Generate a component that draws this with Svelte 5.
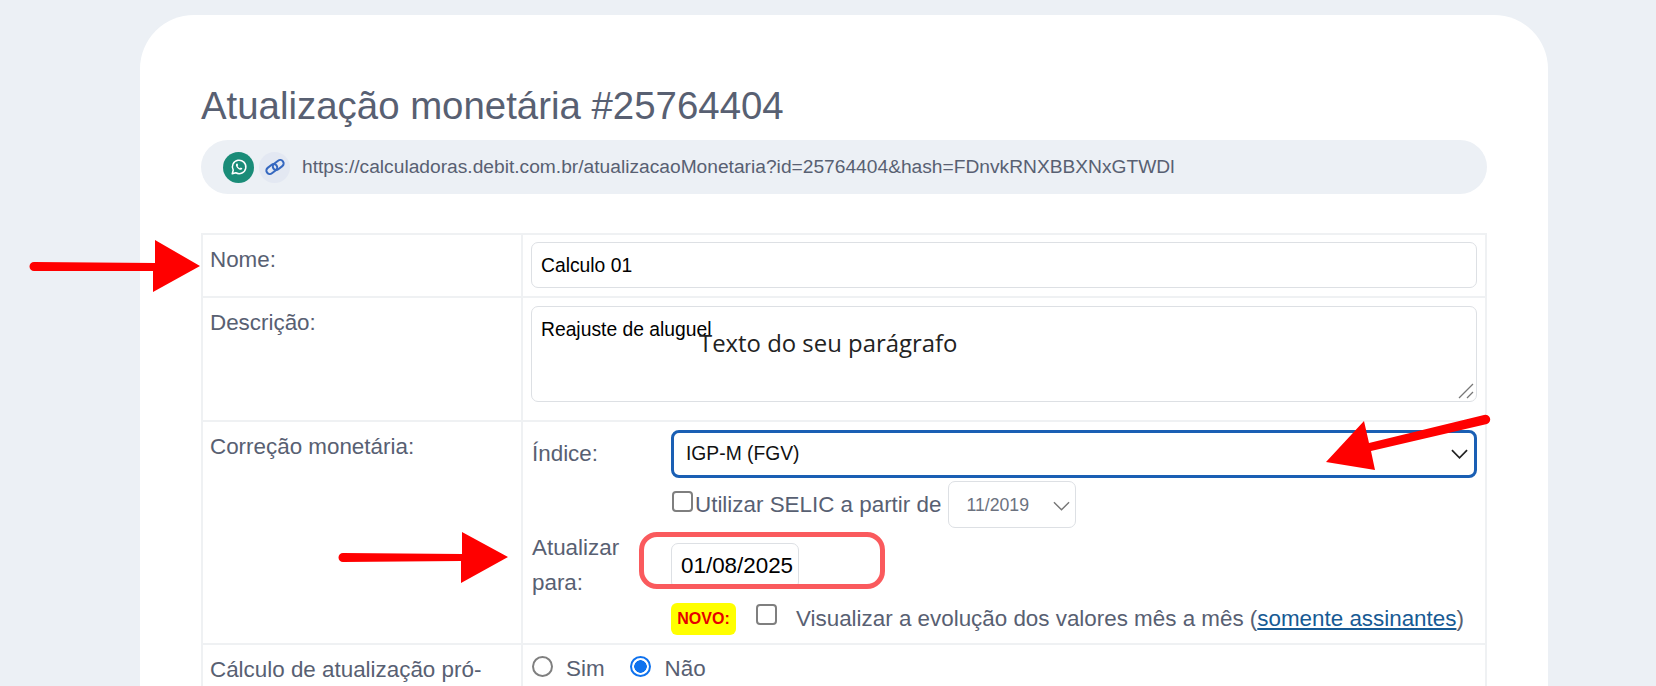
<script lang="ts">
  const shareUrl = 'https://calculadoras.debit.com.br/atualizacaoMonetaria?id=25764404&hash=FDnvkRNXBBXNxGTWDl';
</script>

<div class="page">
  <main class="card">
    <h1>Atualização monetária #25764404</h1>

    <div class="share">
      <span class="icon-btn whats">
        <svg viewBox="0 0 24 24" width="18" height="18" fill="none" stroke="#fff" stroke-width="2">
          <path d="M3 21l1.300-4.700a9 9 0 1 1 3.400 3.400z" stroke-linejoin="round" />
          <path d="M8.600 7.600c-.9.9-.9 2.400 0 4 1.100 2 2.600 3.300 4.600 4 1.400.4 2.500.1 3-.9.2-.4.2-.8.1-1l-2-1-.9 1c-1.500-.5-2.700-1.700-3.300-3.200l.8-.9-.8-2.100c-.5-.2-1-.2-1.500.1z" fill="#fff" stroke="none" />
        </svg>
      </span>
      <span class="icon-btn chain">
        <svg viewBox="0 0 24 24" width="22" height="22" fill="none" stroke="#3568c0" stroke-width="2.200">
          <rect x="2" y="10.500" width="13" height="7.500" rx="3.750" transform="rotate(-38 8.500 14.250)" />
          <rect x="9" y="6" width="13" height="7.500" rx="3.750" transform="rotate(-38 15.500 9.750)" />
        </svg>
      </span>
      <span class="url">{shareUrl}</span>
    </div>

    <table>
      <tbody>
        <tr>
          <td class="label-cell">Nome:</td>
          <td><input class="field" type="text" value="Calculo 01" /></td>
        </tr>
        <tr>
          <td class="label-cell">Descrição:</td>
          <td>
            <div class="area-wrap">
              <textarea class="field area">Reajuste de aluguel</textarea>
              <svg class="grip" viewBox="0 0 16 16" width="16" height="16" stroke="#777" stroke-width="1.300">
                <path d="M1 15L15 1M9 15l6-6" />
              </svg>
            </div>
          </td>
        </tr>
        <tr>
          <td class="label-cell">Correção monetária:</td>
          <td>
            <div class="correction">
              <span class="index-label">Índice:</span>
              <div class="select focus">
                IGP-M (FGV)
                <svg viewBox="0 0 18 10" width="17" height="10" fill="none" stroke="#222" stroke-width="1.800"><path d="M1 1l8 8 8-8" /></svg>
              </div>

              <div class="selic">
                <span class="check raised"></span>
                <span class="selic-text">Utilizar SELIC a partir de</span>
                <div class="select small">
                  11/2019
                  <svg viewBox="0 0 18 10" width="17" height="10" fill="none" stroke="#777" stroke-width="1.500"><path d="M1 1l8 8 8-8" /></svg>
                </div>
              </div>

              <span class="update-label">Atualizar para:</span>
              <div class="date-row"><input class="field date" type="text" value="01/08/2025" /></div>

              <div class="novo-row">
                <span class="novo">NOVO:</span>
                <span class="check top"></span>
                <span class="evo">Visualizar a evolução dos valores mês a mês (<a href="#assinantes">somente assinantes</a>)</span>
              </div>
            </div>
          </td>
        </tr>
        <tr>
          <td class="label-cell">Cálculo de atualização pró-rata:</td>
          <td>
            <div class="radios">
              <span class="radio"></span><span>Sim</span>
              <span class="radio on"></span><span>Não</span>
            </div>
          </td>
        </tr>
      </tbody>
    </table>
  </main>

  <!-- annotations pasted on top of the screenshot -->
  <span class="note">Texto do seu parágrafo</span>
  <span class="highlight"></span>
  <svg class="arrows" viewBox="0 0 1656 686" width="1656" height="686">
    <path d="M34 262L155 263V240L200 266L153 292V271L34 271A4.500 4.500 0 0 1 34 262Z" fill="#ff0000" />
    <path d="M343 553L462 554V532L508 557L461 583V561L343 562A4.500 4.500 0 0 1 343 553Z" fill="#ff0000" />
    <path d="M1484 415L1369 443L1364 421L1326 462L1375 470L1371 451L1487 424A4.500 4.500 0 0 0 1484 415Z" fill="#ff0000" />
  </svg>
</div>

<style>
  :global(body) {
    margin: 0;
    background: #ecf0f5;
    font-family: "Liberation Sans", Arial, sans-serif;
  }

  .page {
    position: relative;
    height: 686px;
    overflow: hidden;
    box-sizing: border-box;
    padding: 15px 108px 0 140px;
  }

  .card {
    background: #fff;
    border-radius: 54px 54px 0 0;
    padding: 68px 61px 0;
    min-height: 800px;
    color: #586072;
  }

  h1 {
    margin: 0 0 11px;
    font-size: 38.4px;
    line-height: 46px;
    font-weight: 400;
  }

  .share {
    display: flex;
    align-items: center;
    height: 54px;
    padding: 0 22px;
    background: #ecf0f5;
    border-radius: 27px;
    margin-bottom: 39px;
  }

  .icon-btn {
    width: 31px;
    height: 31px;
    border-radius: 50%;
    display: flex;
    align-items: center;
    justify-content: center;
    margin-right: 5px;
  }

  .whats { background: #1a8c78; }
  .chain { background: #e3e8f2; margin-right: 12px; }

  .url {
    font-size: 19.2px;
    color: #586072;
    white-space: nowrap;
  }

  table {
    width: 100%;
    border-collapse: collapse;
    table-layout: fixed;
  }

  td {
    border: 2px solid #eff1f3;
    padding: 7px 8px 8px;
    vertical-align: top;
    font-size: 22.4px;
    line-height: 33.6px;
  }

  .label-cell {
    width: 303px;
    padding-left: 7px;
    padding-top: 7.5px;
  }

  .field {
    display: block;
    box-sizing: border-box;
    width: 100%;
    height: 46px;
    padding: 2px 9px 0;
    border: 1px solid #dde0e4;
    border-radius: 7px;
    background: #fff;
    color: #000;
    font-family: inherit;
    font-size: 19.3px;
    outline: none;
  }

  .area-wrap {
    position: relative;
    margin: 1px 0 10px;
  }

  .area {
    height: 96px;
    padding: 11px 9px;
    resize: none;
    line-height: 24px;
  }

  .grip {
    position: absolute;
    right: 3px;
    bottom: 3px;
  }

  .correction {
    display: grid;
    grid-template-columns: 139px 1fr;
    margin-top: 1px;
    padding-left: 1px;
  }

  .index-label { align-self: center; }

  .update-label {
    align-self: start;
    margin-top: 2px;
    width: 110px;
    line-height: 35px;
  }

  .select {
    display: flex;
    align-items: center;
    justify-content: space-between;
    box-sizing: border-box;
    color: #111;
    font-size: 19.3px;
    background: #fff;
  }

  .focus {
    height: 48px;
    padding: 0 6px 0 12px;
    border: 3px solid #1a5fb4;
    border-radius: 8px;
  }

  .selic {
    grid-column: 2;
    display: flex;
    align-items: center;
    margin: 3px 0 0 1px;
    height: 47px;
  }

  .selic-text { margin: 0 7px 0 2px; }

  .small {
    width: 128px;
    height: 47px;
    padding: 2px 5px 0 17px;
    border: 1px solid #dde0e4;
    border-radius: 7px;
    color: #6c727f;
    font-size: 17.7px;
  }

  .check {
    flex: none;
    box-sizing: border-box;
    width: 21px;
    height: 21px;
    border: 2px solid #7f7f7f;
    border-radius: 4px;
    background: #fff;
  }

  .check.raised { margin-bottom: 7px; }
  .check.top { margin-bottom: 10px; }

  .date-row { margin: 15px 0 0; }

  .date {
    width: 128px;
    padding: 0 4px 0 9px;
    font-size: 22.4px;
  }

  .novo-row {
    grid-column: 2;
    display: flex;
    align-items: center;
    margin-top: 3px;
    height: 32px;
    white-space: nowrap;
  }

  .novo {
    width: 65px;
    height: 32px;
    display: flex;
    align-items: center;
    justify-content: center;
    background: #ffff00;
    border-radius: 6px;
    color: #e60000;
    font-size: 16px;
    font-weight: 700;
    margin-right: 20px;
  }

  .evo { margin-left: 19px; }
  .evo a { color: #175a94; }

  .radios {
    display: flex;
    align-items: center;
    height: 33.6px;
    padding-left: 1px;
  }

  .radio {
    box-sizing: border-box;
    width: 21px;
    height: 21px;
    border: 2px solid #7f7f7f;
    border-radius: 50%;
    margin: 0 13px 4px 0;
  }

  .radio.on {
    border: 2px solid #0f72ee;
    background: radial-gradient(circle, #0f72ee 0 6px, #fff 6.5px);
    margin-left: 25px;
    margin-right: 14px;
  }

  .note {
    position: absolute;
    left: 699px;
    top: 327px;
    font-family: "Open Sans", sans-serif;
    font-size: 23.9px;
    line-height: 32px;
    color: #222;
    white-space: nowrap;
  }

  .highlight {
    position: absolute;
    left: 639px;
    top: 532px;
    width: 246px;
    height: 57px;
    box-sizing: border-box;
    border: 5px solid #fa5a5d;
    border-radius: 18px;
  }

  .arrows {
    position: absolute;
    left: 0;
    top: 0;
    pointer-events: none;
  }
</style>
